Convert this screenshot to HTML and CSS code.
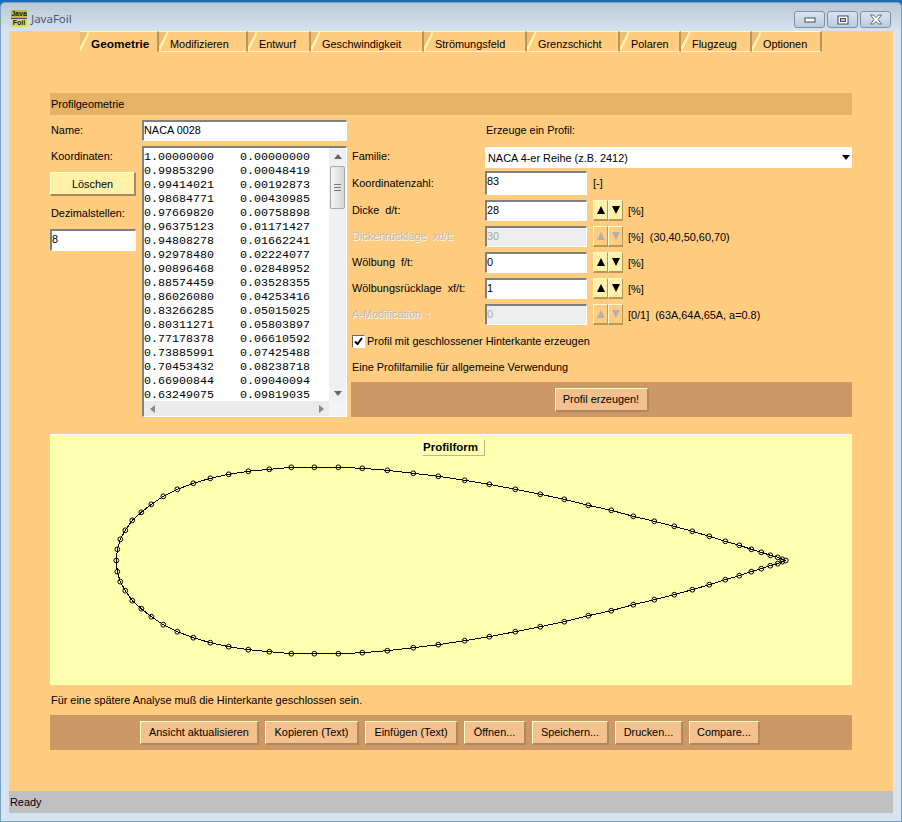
FILE: index.html
```html
<!DOCTYPE html>
<html lang="de">
<head>
    <meta charset="UTF-8">
    <meta name="viewport" content="width=device-width, initial-scale=1.0">
    <title>JavaFoil</title>
    <link rel="stylesheet" href="styles.css">
</head>
<body>
    <div class="window">
        <div class="titlebar">
            <div class="app-icon">
                <span class="app-icon-top">Java</span>
                <span class="app-icon-bottom">Foil</span>
            </div>
            <span class="title">JavaFoil</span>
            <div class="win-buttons">
                <div class="win-button">
                    <svg width="12" height="6" viewBox="0 0 12 6"><rect x="1" y="1" width="10" height="4" fill="#fff" stroke="#3c4c60"/></svg>
                </div>
                <div class="win-button">
                    <svg width="12" height="10" viewBox="0 0 12 10"><rect x="1" y="1" width="10" height="8" fill="#fff" stroke="#3c4c60"/><rect x="3.5" y="3.5" width="5" height="3" fill="#b8c8dc" stroke="#3c4c60"/></svg>
                </div>
                <div class="win-button">
                    <svg width="14" height="11" viewBox="0 0 14 11"><path d="M1.5 1h3L7 3.6 9.500 1h3L9 5.500l3.500 4.500h-3L7 7.400 4.500 10h-3L5 5.500z" fill="#fff" stroke="#5a6a80"/></svg>
                </div>
            </div>
        </div>

        <div class="content">
            <div class="tabs">
                <div class="tab selected">Geometrie</div>
                <div class="tab w-mod">Modifizieren</div>
                <div class="tab w-ent">Entwurf</div>
                <div class="tab w-ges">Geschwindigkeit</div>
                <div class="tab w-str">Strömungsfeld</div>
                <div class="tab w-gre">Grenzschicht</div>
                <div class="tab w-pol">Polaren</div>
                <div class="tab w-flu">Flugzeug</div>
                <div class="tab w-opt">Optionen</div>
            </div>

            <div class="panel">
                <div class="section-title">Profilgeometrie</div>

                <div class="form">
                    <div class="col-left">
                        <label class="label name-label">Name:</label>
                        <label class="label coord-label">Koordinaten:</label>
                        <button class="btn yellow clear-btn" type="button">Löschen</button>
                        <label class="label dec-label">Dezimalstellen:</label>
                        <input class="field" type="text" value="8">
                    </div>

                    <div class="col-mid">
                        <input class="field name-field" type="text" value="NACA 0028">
                        <div class="coords">
                            <div class="coord-lines">
                                <span>1.00000000</span><span>0.00000000</span>
                                <span>0.99853290</span><span>0.00048419</span>
                                <span>0.99414021</span><span>0.00192873</span>
                                <span>0.98684771</span><span>0.00430985</span>
                                <span>0.97669820</span><span>0.00758898</span>
                                <span>0.96375123</span><span>0.01171427</span>
                                <span>0.94808278</span><span>0.01662241</span>
                                <span>0.92978480</span><span>0.02224077</span>
                                <span>0.90896468</span><span>0.02848952</span>
                                <span>0.88574459</span><span>0.03528355</span>
                                <span>0.86026080</span><span>0.04253416</span>
                                <span>0.83266285</span><span>0.05015025</span>
                                <span>0.80311271</span><span>0.05803897</span>
                                <span>0.77178378</span><span>0.06610592</span>
                                <span>0.73885991</span><span>0.07425488</span>
                                <span>0.70453432</span><span>0.08238718</span>
                                <span>0.66900844</span><span>0.09040094</span>
                                <span>0.63249075</span><span>0.09819035</span>
                            </div>
                            <div class="vscroll">
                                <svg width="8" height="5" viewBox="0 0 8 5" class="v-up"><path d="M4 0L8 5H0z" fill="#666"/></svg>
                                <div class="thumb">
                                    <svg width="7" height="7" viewBox="0 0 7 7"><path d="M0 .5h7M0 3.500h7M0 6.500h7" stroke="#777"/></svg>
                                </div>
                                <svg width="8" height="5" viewBox="0 0 8 5" class="v-down"><path d="M0 0H8L4 5z" fill="#666"/></svg>
                            </div>
                            <div class="hscroll">
                                <svg width="5" height="8" viewBox="0 0 5 8"><path d="M5 0V8L0 4z" fill="#888"/></svg>
                                <svg width="5" height="8" viewBox="0 0 5 8"><path d="M0 0V8L5 4z" fill="#888"/></svg>
                            </div>
                            <div class="scroll-corner"></div>
                        </div>
                    </div>

                    <div class="col-right">
                        <div class="head-row"><span class="label">Erzeuge ein Profil:</span></div>
                        <div class="row combo-row">
                            <label class="label row-label raised">Familie:</label>
                            <div class="combo">
                                <span>NACA 4-er Reihe (z.B. 2412)</span>
                                <i class="combo-arrow"></i>
                            </div>
                        </div>
                        <div class="row tall">
                            <label class="label row-label">Koordinatenzahl:</label>
                            <input class="field num" type="text" value="83">
                            <span class="unit first">[-]</span>
                        </div>
                        <div class="row">
                            <label class="label row-label">Dicke  d/t:</label>
                            <input class="field num" type="text" value="28">
                            <div class="spin"><button class="spin-btn" type="button"><i class="up"></i></button><button class="spin-btn" type="button"><i class="down"></i></button></div>
                            <span class="unit">[%]</span>
                        </div>
                        <div class="row disabled">
                            <label class="label row-label">Dickenrücklage  xd/t:</label>
                            <input class="field num" type="text" value="30" disabled>
                            <div class="spin"><button class="spin-btn" type="button" disabled><i class="up"></i></button><button class="spin-btn" type="button" disabled><i class="down"></i></button></div>
                            <span class="unit">[%]  (30,40,50,60,70)</span>
                        </div>
                        <div class="row">
                            <label class="label row-label">Wölbung  f/t:</label>
                            <input class="field num" type="text" value="0">
                            <div class="spin"><button class="spin-btn" type="button"><i class="up"></i></button><button class="spin-btn" type="button"><i class="down"></i></button></div>
                            <span class="unit">[%]</span>
                        </div>
                        <div class="row">
                            <label class="label row-label">Wölbungsrücklage  xf/t:</label>
                            <input class="field num" type="text" value="1">
                            <div class="spin"><button class="spin-btn" type="button"><i class="up"></i></button><button class="spin-btn" type="button"><i class="down"></i></button></div>
                            <span class="unit">[%]</span>
                        </div>
                        <div class="row disabled">
                            <label class="label row-label">A-Modification  :</label>
                            <input class="field num" type="text" value="0" disabled>
                            <div class="spin"><button class="spin-btn" type="button" disabled><i class="up"></i></button><button class="spin-btn" type="button" disabled><i class="down"></i></button></div>
                            <span class="unit">[0/1]  (63A,64A,65A, a=0.8)</span>
                        </div>
                        <div class="check-row">
                            <div class="check">
                                <svg width="9" height="9" viewBox="0 0 9 9"><path d="M1 4.500l2.500 2.500 4.500-6" fill="none" stroke="#000" stroke-width="2"/></svg>
                            </div>
                            <span class="label">Profil mit geschlossener Hinterkante erzeugen</span>
                        </div>
                        <div class="hint label">Eine Profilfamilie für allgemeine Verwendung</div>
                        <div class="btn-bar center">
                            <button class="btn" type="button">Profil erzeugen!</button>
                        </div>
                    </div>
                </div>

                <div class="plot">
                    <div class="plot-title">Profilform</div>
                    <svg class="airfoil" width="802" height="250" viewBox="0 0 802 250">
                        <defs>
                            <marker id="pt" markerUnits="userSpaceOnUse" markerWidth="8" markerHeight="8" refX="4" refY="4">
                                <circle cx="4" cy="4" r="2.400" fill="none" stroke="#000" stroke-width="1"/>
                            </marker>
                        </defs>
                        <polyline class="foil-line" points="735.700,125.500 732.300,124.300 727.700,122.300 720.300,120.300 711.300,117.300 701.300,114.300 689.300,110.300 675.300,106.300 659.300,101.300 642.300,96.300 624.300,91.300 604.300,86.300 583.300,81.300 561.300,75.300 538.300,70.300 514.300,64.300 490.300,59.300 465.300,54.300 439.300,49.300 414.700,45.300 388.300,41.300 363.300,38.300 337.300,35.300 312.300,33.300 288.300,32.300 264.300,32.300 241.300,32.300 219.300,34.300 198.300,36.300 178.700,39.300 160.300,43.300 143.300,48.300 127.300,54.300 113.300,61.300 101.300,69.300 91.300,77.300 82.300,85.300 75.300,95.300 70.300,104.300 67.300,114.300 66.300,125.500 67.300,136.700 70.300,146.700 75.300,155.700 82.300,165.700 91.300,173.700 101.300,181.700 113.300,189.700 127.300,196.700 143.300,202.700 160.300,207.700 178.700,211.700 198.300,214.700 219.300,216.700 241.300,218.700 264.300,218.700 288.300,218.700 312.300,217.700 337.300,215.700 363.300,212.700 388.300,209.700 414.700,205.700 439.300,201.700 465.300,196.700 490.300,191.700 514.300,186.700 538.300,180.700 561.300,175.700 583.300,169.700 604.300,164.700 624.300,159.700 642.300,154.700 659.300,149.700 675.300,144.700 689.300,140.700 701.300,136.700 711.300,133.700 720.300,130.700 727.700,128.700 732.300,126.700 735.700,125.500"/>
                    </svg>
                </div>

                <div class="caption label">Für eine spätere Analyse muß die Hinterkante geschlossen sein.</div>

                <div class="btn-bar buttons">
                    <button class="btn b-ans" type="button">Ansicht aktualisieren</button>
                    <button class="btn b-kop" type="button">Kopieren (Text)</button>
                    <button class="btn b-ein" type="button">Einfügen (Text)</button>
                    <button class="btn b-off" type="button">Öffnen...</button>
                    <button class="btn b-spe" type="button">Speichern...</button>
                    <button class="btn b-dru" type="button">Drucken...</button>
                    <button class="btn b-com" type="button">Compare...</button>
                </div>
            </div>

            <div class="status">Ready</div>
        </div>
    </div>
</body>
</html>
```

FILE: styles.css
```css
* {
    box-sizing: border-box;
}
body {
    margin: 0;
    width: 902px;
    height: 822px;
    overflow: hidden;
    font-family: "Liberation Sans", Arial, sans-serif;
    font-size: 10.900px;
    color: #000;
    background: #1c6cb8;
}
.window {
    height: 820px;
    margin-top: 2px;
    padding: 0 8px 8px;
    display: flex;
    flex-direction: column;
    border-radius: 5px 5px 0 0;
    border: 1px solid #7aa0c0;
    border-top-color: #8a9cb0;
    background: linear-gradient(#b9c8d8, #d6e4f2 29px);
}

/* title bar */
.titlebar {
    height: 28px;
    padding-right: 2px;
    display: flex;
    align-items: flex-start;
    flex-shrink: 0;
}
.app-icon {
    width: 16px;
    height: 17px;
    margin: 7px 0 0 2px;
    display: flex;
    flex-direction: column;
    justify-content: space-between;
    background: #3c4a78;
    font-size: 7px;
    line-height: 8px;
    font-weight: bold;
    text-align: center;
    overflow: hidden;
}
.app-icon-top {
    color: #111;
    background: #c8b840;
}
.app-icon-bottom {
    background: #e8d850;
    color: #111;
}
.title {
    margin: 8px 0 0 4px;
    font-family: "Noto Sans", sans-serif;
    font-size: 11.500px;
    line-height: 16px;
    color: #4e5a68;
}
.win-buttons {
    margin: 8px 0 0 auto;
    display: flex;
    gap: 2px;
}
.win-button {
    width: 31px;
    height: 17px;
    display: flex;
    align-items: center;
    justify-content: center;
    border: 1px solid #7f90a8;
    border-radius: 3px;
    background: linear-gradient(#dbe5f0, #bccadc);
}

/* orange client area */
.content {
    flex: 1;
    display: flex;
    flex-direction: column;
    background: #ffcc80;
}
.tabs {
    height: 21px;
    padding-left: 71px;
    display: flex;
    flex-shrink: 0;
}
.tab {
    width: 79px;
    padding: 6px 0 0 11px;
    border-top: 1px solid #ffffc0;
    border-bottom: 1px solid #fff0c0;
    border-right: 2px solid #b8965a;
    line-height: 12px;
    white-space: nowrap;
    background: linear-gradient(to bottom right, #efbc74 calc(50% - 1.5px), #fff0a8 calc(50% - 1.5px), #fff0a8 calc(50% + 1px), transparent calc(50% + 1px)) no-repeat 0 0 / 9px 100%;
}
.tab.selected {
    border-bottom-color: transparent;
    font-weight: bold;
    font-size: 11.800px;
}
.w-mod { width: 89px; }
.w-ent { width: 63px; }
.w-ges { width: 113px; }
.w-str { width: 103px; }
.w-gre { width: 93px; }
.w-pol { width: 61px; }
.w-flu { width: 71px; }
.w-opt { width: 70px; }

/* main panel */
.panel {
    flex: 1;
    padding: 41px 41px 0;
}
.section-title {
    height: 22px;
    padding-left: 1px;
    line-height: 22px;
    background: #e5b266;
}
.form {
    height: 297px;
    margin-top: 5px;
    display: flex;
}
.label {
    white-space: pre;
    line-height: 13px;
}
.col-left {
    width: 86px;
    margin-right: 6px;
    display: flex;
    flex-direction: column;
}
.name-label {
    margin: 4px 0 0 1px;
}
.coord-label {
    margin: 13px 0 0 1px;
}
.clear-btn {
    height: 23px;
    margin-top: 9px;
    width: 86px;
}
.dec-label {
    margin: 11px 0 0 1px;
}
.col-left .field {
    height: 22px;
    margin-top: 9px;
}
.col-mid {
    width: 205px;
    margin-right: 4px;
    display: flex;
    flex-direction: column;
}
.name-field {
    height: 21px;
    flex-shrink: 0;
}

/* inputs */
.field {
    width: 100%;
    padding: 0 0 3px 0;
    border-style: solid;
    border-width: 2px 1px 1px 2px;
    border-color: #808080 #fff #fff #808080;
    border-radius: 0;
    background: #fff;
    font-family: "Liberation Sans", Arial, sans-serif;
    font-size: 10.900px;
    color: #000;
    outline: none;
}
.field:disabled {
    background: #eeeeee;
    color: #a8a8a8;
}

/* coordinate list */
.coords {
    height: 271px;
    margin-top: 5px;
    display: grid;
    grid-template-columns: 185px 17px;
    grid-template-rows: 253px 15px;
    border-style: solid;
    border-width: 2px 1px 1px 2px;
    border-color: #808080 #fff #fff #808080;
    background: #fff;
}
.coord-lines {
    padding: 2px 0 0 0;
    display: grid;
    grid-template-columns: 96px 86px;
    grid-auto-rows: 14px;
    overflow: hidden;
    font-family: "Liberation Mono", "Courier New", monospace;
    font-size: 11.670px;
    line-height: 14px;
}
.vscroll {
    padding: 0 1px;
    display: flex;
    flex-direction: column;
    align-items: center;
    background: #f0f0f0;
}
.v-up {
    margin-top: 6px;
}
.thumb {
    width: 15px;
    height: 43px;
    margin-top: 7px;
    display: flex;
    align-items: center;
    justify-content: center;
    border: 1px solid #a8a8a8;
    border-radius: 2px;
    background: linear-gradient(to right, #f4f4f4, #d8d8d8);
}
.v-down {
    margin-top: auto;
    margin-bottom: 5px;
}
.hscroll {
    padding: 0 5px 0 6px;
    display: flex;
    align-items: center;
    justify-content: space-between;
    background: #ebebeb;
}
.scroll-corner {
    background: #f4f4f4;
}

/* right column */
.col-right {
    width: 501px;
    display: flex;
    flex-direction: column;
}
.head-row {
    height: 21px;
    padding: 4px 0 0 135px;
}
.row {
    height: 21px;
    margin-top: 5px;
    display: flex;
    align-items: center;
}
.combo-row {
    margin-top: 6px;
}
.tall {
    height: 24px;
    margin-top: 3px;
}
.row-label {
    width: 134px;
    padding-left: 1px;
    flex-shrink: 0;
}
.raised {
    padding-bottom: 2px;
}
.field.num {
    width: 102px;
    height: 100%;
    flex-shrink: 0;
}
.tall .field.num {
    padding-bottom: 6px;
}
.combo {
    flex: 1;
    height: 21px;
    padding: 0 2px 0 3px;
    display: flex;
    align-items: center;
    justify-content: space-between;
    background: #fff;
}
.combo-arrow {
    width: 0;
    height: 0;
    border-style: solid;
    border-width: 5px 4px 0;
    border-color: #000 transparent transparent;
}
.spin {
    height: 100%;
    margin-left: 6px;
    display: flex;
}
.spin-btn {
    width: 15px;
    height: 100%;
    padding: 0;
    display: flex;
    align-items: center;
    justify-content: center;
    border-style: solid;
    border-width: 1px 1px 2px 1px;
    border-color: #fff8d0 #b8965a #b8965a #fff8d0;
    background: #fff2a8;
}
.spin-btn i {
    width: 0;
    height: 0;
    border-style: solid;
}
.up {
    border-width: 0 4px 8px;
    border-color: transparent transparent #000;
}
.down {
    border-width: 8px 4px 0;
    border-color: #000 transparent transparent;
}
.unit {
    margin-left: 5px;
    white-space: pre;
}
.unit.first {
    margin-left: 6px;
}
.disabled .row-label {
    color: #b8b8b8;
    text-shadow: 1px 1px 0 #fff;
}
.disabled .spin-btn {
    background: #ffcc80;
}
.disabled .up {
    border-bottom-color: #b0b0b0;
}
.disabled .down {
    border-top-color: #b0b0b0;
}
.check-row {
    margin: 10px 0 0 1px;
    display: flex;
    align-items: center;
    gap: 2px;
}
.check {
    width: 13px;
    height: 13px;
    display: flex;
    align-items: center;
    justify-content: center;
    border-style: solid;
    border-width: 1px;
    border-color: #666 #fff #fff #666;
    background: #fff;
}
.hint {
    margin: 13px 0 0 1px;
}

/* buttons */
.btn-bar {
    height: 35px;
    display: flex;
    align-items: center;
    background: #cc9966;
}
.btn-bar.center {
    margin-top: 8px;
    justify-content: center;
}
.btn {
    height: 24px;
    padding: 0;
    border-style: solid;
    border-width: 1px 2px 2px 1px;
    border-color: #ffffc0 #aa8860 #aa8860 #ffffc0;
    background: #f3c08e;
    font-family: "Liberation Sans", Arial, sans-serif;
    font-size: 10.900px;
    color: #000;
}
.btn-bar.center .btn {
    width: 94px;
}
.btn.yellow {
    background: #fff2a8;
}
.buttons {
    padding-left: 90px;
    gap: 6px;
}
.b-ans { width: 119px; }
.b-kop { width: 94px; }
.b-ein { width: 93px; }
.b-off { width: 62px; }
.b-spe { width: 77px; }
.b-dru { width: 68px; }
.b-com { width: 71px; }

/* plot */
.plot {
    position: relative;
    height: 251px;
    margin-top: 17px;
    border-top: 1px solid #fff;
    background: #ffffb0;
}
.plot-title {
    position: absolute;
    left: 372px;
    top: 4px;
    width: 63px;
    height: 17px;
    padding-left: 0;
    border-right: 1px solid #b8b890;
    border-bottom: 1px solid #b8b890;
    border-top: 1px solid #fff;
    border-left: 1px solid #fff;
    font-size: 11.500px;
    line-height: 15px;
    font-weight: bold;
    white-space: nowrap;
}
.airfoil {
    display: block;
}
.foil-line {
    fill: none;
    stroke: #000;
    stroke-width: 1;
    shape-rendering: crispEdges;
    marker-start: url(#pt);
    marker-mid: url(#pt);
}
.caption {
    margin: 9px 0 8px 1px;
}
.status {
    height: 22px;
    padding-left: 1px;
    flex-shrink: 0;
    line-height: 22px;
    background: #c0c0c0;
}
```
